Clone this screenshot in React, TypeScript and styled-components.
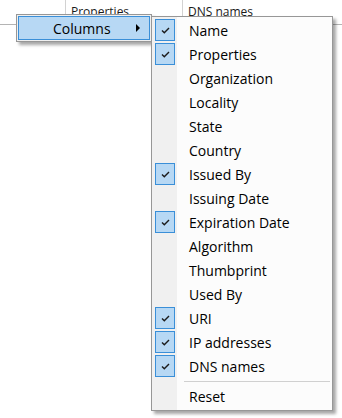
import React from "react";
import styled, { createGlobalStyle } from "styled-components";

const GlobalStyle = createGlobalStyle`
  html, body {
    margin: 0;
    padding: 0;
    background: #fff;
  }
  body {
    font-family: "Open Sans", "Liberation Sans", sans-serif;
    color: #000;
  }
`;

const Page = styled.div`
  position: relative;
  width: 342px;
  height: 418px;
  overflow: hidden;
  background: #fff;
`;

const Header = styled.div`
  display: flex;
  height: 24px;
  border-bottom: 1px solid #b4b4b4;
`;

const HeaderCell = styled.div<{ $width?: number }>`
  flex: ${(p) => (p.$width ? `0 0 ${p.$width}px` : "1 1 auto")};
  padding-left: 5px;
  box-sizing: border-box;
  border-right: ${(p) => (p.$width ? "1px solid #d2d2d2" : "none")};
  font-size: 12px;
  line-height: 24px;
  color: #1a1a1a;
  white-space: nowrap;
  overflow: hidden;
`;

const ParentMenu = styled.div`
  position: absolute;
  left: 16px;
  top: 14px;
  width: 136px;
  box-sizing: border-box;
  padding: 1px;
  background: #f0f0f0;
  border: 1px solid #979797;
  box-shadow: 3px 3px 3px rgba(0, 0, 0, 0.35);
`;

const ParentItem = styled.div`
  display: flex;
  align-items: center;
  height: 24px;
  box-sizing: border-box;
  padding-left: 34px;
  padding-right: 9px;
  background: #b7d8f4;
  border: 1px solid #3a8fd8;
  font-size: 14px;
`;

const ParentLabel = styled.span`
  flex: 1;
`;

const Arrow = styled.span`
  width: 0;
  height: 0;
  border-top: 4px solid transparent;
  border-bottom: 4px solid transparent;
  border-left: 4px solid #000;
`;

const SubMenu = styled.div`
  position: absolute;
  left: 151px;
  top: 16px;
  width: 182px;
  box-sizing: border-box;
  padding: 1px 1px 2px;
  border: 1px solid #979797;
  background: linear-gradient(to right, #f0f0f0 0, #f0f0f0 25px, #fcfcfc 25px);
  box-shadow: 3px 3px 3px rgba(0, 0, 0, 0.35);
`;

const Item = styled.div`
  display: flex;
  align-items: center;
  height: 24px;
  font-size: 14px;
  white-space: nowrap;
`;

const CheckBox = styled.span<{ $checked: boolean }>`
  display: flex;
  align-items: center;
  justify-content: center;
  width: 20px;
  height: 22px;
  margin-left: 2px;
  box-sizing: border-box;
  border: 1px solid ${(p) => (p.$checked ? "#3a8fd8" : "transparent")};
  background: ${(p) => (p.$checked ? "#b7d8f4" : "transparent")};
`;

const Label = styled.span`
  margin-left: 14px;
`;

const Separator = styled.div`
  height: 6px;
  display: flex;
  align-items: center;
  padding-left: 31px;
  padding-right: 1px;

  &::after {
    content: "";
    flex: 1;
    height: 1px;
    background: #d0d0d0;
  }
`;

const Check = () => (
  <svg width="9" height="7" viewBox="0 0 9 7">
    <path d="M1 3.5 L3.3 5.8 L8 1" fill="none" stroke="#1b1b1b" strokeWidth="1.4" />
  </svg>
);

const columns: [string, boolean][] = [
  ["Name", true],
  ["Properties", true],
  ["Organization", false],
  ["Locality", false],
  ["State", false],
  ["Country", false],
  ["Issued By", true],
  ["Issuing Date", false],
  ["Expiration Date", true],
  ["Algorithm", false],
  ["Thumbprint", false],
  ["Used By", false],
  ["URI", true],
  ["IP addresses", true],
  ["DNS names", true],
];

export default function App() {
  return (
    <Page>
      <GlobalStyle />
      <Header>
        <HeaderCell $width={66} />
        <HeaderCell $width={117}>Properties</HeaderCell>
        <HeaderCell>DNS names</HeaderCell>
      </Header>

      <ParentMenu>
        <ParentItem>
          <ParentLabel>Columns</ParentLabel>
          <Arrow />
        </ParentItem>
      </ParentMenu>

      <SubMenu>
        {columns.map(([name, checked]) => (
          <Item key={name}>
            <CheckBox $checked={checked}>{checked && <Check />}</CheckBox>
            <Label>{name}</Label>
          </Item>
        ))}
        <Separator />
        <Item>
          <CheckBox $checked={false} />
          <Label>Reset</Label>
        </Item>
      </SubMenu>
    </Page>
  );
}
